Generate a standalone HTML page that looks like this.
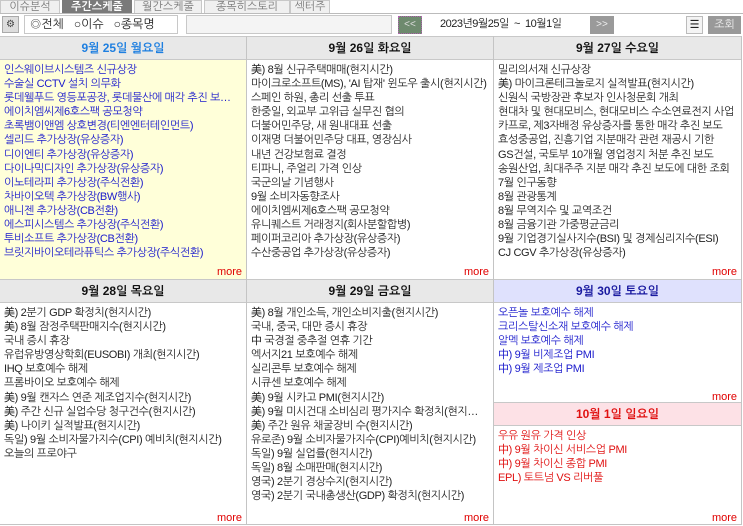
<!DOCTYPE html>
<html><head><meta charset="utf-8"><style>
*{margin:0;padding:0;box-sizing:border-box}
body{width:743px;height:526px;background:#fff;font-family:"Liberation Sans","NanumGothic","Noto Sans CJK KR",sans-serif;font-size:11px;color:#222;position:relative;overflow:hidden}
.abs{position:absolute}
.tab{position:absolute;top:0;height:14px;background:#f0f0f0;border:1px solid #c8c8c8;color:#777;font-size:11px;line-height:12px;text-align:center}
.tab.on{background:#7a7a7a;color:#fff;font-weight:bold;border-color:#7a7a7a}
.col{position:absolute;border-right:1px solid #c4c4c4;border-bottom:1px solid #c4c4c4}
.hd{height:24px;background:#e8e8e8;border-bottom:1px solid #c8c8c8;border-top:1px solid #c8c8c8;text-align:center;font-weight:bold;font-size:12px;line-height:22px;color:#111}
.items{padding:3px 0 0 4px}
.items div{height:14.1px;line-height:14.1px;white-space:nowrap;overflow:hidden;text-overflow:ellipsis;width:236px;letter-spacing:-0.35px}
.more{position:absolute;right:4px;color:#e00000;font-size:11px}
.blue{color:#1a1acc}
.red{color:#e01010}
</style></head><body>
<div class="tab" style="left:0;width:60px">이슈분석</div>
<div class="tab on" style="left:62px;width:70px">주간스케줄</div>
<div class="tab" style="left:134px;width:68px">월간스케줄</div>
<div class="tab" style="left:204px;width:86px">종목히스토리</div>
<div class="tab" style="left:290px;width:40px">섹터주</div>
<div class="abs" style="left:0;top:13px;width:743px;height:1px;background:#bbb"></div>
<div class="abs" style="left:2px;top:16px;width:17px;height:17px;background:#ddd;border:1px solid #aaa;font-size:10px;line-height:15px;text-align:center;color:#444">⚙</div>
<div class="abs" style="left:24px;top:15px;width:154px;height:19px;border:1px solid #c8c8c8;font-size:12px;line-height:17px;padding-left:5px;color:#222">◎전체 &nbsp;&nbsp;○이슈 &nbsp;&nbsp;○종목명</div>
<div class="abs" style="left:186px;top:15px;width:206px;height:19px;border:1px solid #c8c8c8;background:#f4f4f4"></div>
<div class="abs" style="left:398px;top:16px;width:24px;height:18px;background:#6e8a6e;border:1px dotted #b060b0;color:#ddd;font-size:10px;line-height:16px;text-align:center">&lt;&lt;</div>
<div class="abs" style="left:440px;top:16px;font-size:11px;line-height:17px;letter-spacing:-0.5px;color:#222">2023년9월25일 &nbsp;~ &nbsp;10월1일</div>
<div class="abs" style="left:590px;top:16px;width:24px;height:18px;background:#9a9a9a;color:#eee;font-size:10px;line-height:18px;text-align:center">&gt;&gt;</div>
<div class="abs" style="left:686px;top:16px;width:17px;height:18px;background:#f4f4f4;border:1px solid #bbb;font-size:11px;line-height:16px;text-align:center">☰</div>
<div class="abs" style="left:708px;top:16px;width:33px;height:18px;background:#999;color:#eee;font-size:11px;line-height:18px;text-align:center">조회</div>

<!-- row1 -->
<div class="col" style="left:0;top:36px;width:247px;height:244px;background:#ffffd9">
<div class="hd" style="color:#1e7fe0">9월 25일 월요일</div>
<div class="items blue">
<div>인스웨이브시스템즈 신규상장</div><div>수술실 CCTV 설치 의무화</div><div>롯데웰푸드 영등포공장, 롯데물산에 매각 추진 보도에 대한 조회공시</div><div>에이치엠씨제6호스팩 공모청약</div><div>초록뱀이앤엠 상호변경(티엔엔터테인먼트)</div><div>셀리드 추가상장(유상증자)</div><div>디이엔티 추가상장(유상증자)</div><div>다이나믹디자인 추가상장(유상증자)</div><div>이노테라피 추가상장(주식전환)</div><div>차바이오텍 추가상장(BW행사)</div><div>애니젠 추가상장(CB전환)</div><div>에스피시스템스 추가상장(주식전환)</div><div>투비소프트 추가상장(CB전환)</div><div>브릿지바이오테라퓨틱스 추가상장(주식전환)</div>
</div><div class="more" style="top:230px">more</div></div>
<div class="col" style="left:247px;top:36px;width:247px;height:244px">
<div class="hd">9월 26일 화요일</div>
<div class="items">
<div>美) 8월 신규주택매매(현지시간)</div><div>마이크로소프트(MS), 'AI 탑재' 윈도우 출시(현지시간)</div><div>스페인 하원, 총리 선출 투표</div><div>한중일, 외교부 고위급 실무진 협의</div><div>더불어민주당, 새 원내대표 선출</div><div>이재명 더불어민주당 대표, 영장심사</div><div>내년 건강보험료 결정</div><div>티파니, 주얼리 가격 인상</div><div>국군의날 기념행사</div><div>9월 소비자동향조사</div><div>에이치엠씨제6호스팩 공모청약</div><div>유니퀘스트 거래정지(회사분할합병)</div><div>페이퍼코리아 추가상장(유상증자)</div><div>수산중공업 추가상장(유상증자)</div>
</div><div class="more" style="top:230px">more</div></div>
<div class="col" style="left:494px;top:36px;width:248px;height:244px">
<div class="hd">9월 27일 수요일</div>
<div class="items">
<div>밀리의서재 신규상장</div><div>美) 마이크론테크놀로지 실적발표(현지시간)</div><div>신원식 국방장관 후보자 인사청문회 개최</div><div>현대차 및 현대모비스, 현대모비스 수소연료전지 사업</div><div>카프로, 제3자배정 유상증자를 통한 매각 추진 보도</div><div>효성중공업, 진흥기업 지분매각 관련 재공시 기한</div><div>GS건설, 국토부 10개월 영업정지 처분 추진 보도</div><div>송원산업, 최대주주 지분 매각 추진 보도에 대한 조회</div><div>7월 인구동향</div><div>8월 관광통계</div><div>8월 무역지수 및 교역조건</div><div>8월 금융기관 가중평균금리</div><div>9월 기업경기실사지수(BSI) 및 경제심리지수(ESI)</div><div>CJ CGV 추가상장(유상증자)</div>
</div><div class="more" style="top:230px">more</div></div>

<!-- row2 -->
<div class="col" style="left:0;top:279px;width:247px;height:246px">
<div class="hd">9월 28일 목요일</div>
<div class="items">
<div>美) 2분기 GDP 확정치(현지시간)</div><div>美) 8월 잠정주택판매지수(현지시간)</div><div>국내 증시 휴장</div><div>유럽유방영상학회(EUSOBI) 개최(현지시간)</div><div>IHQ 보호예수 해제</div><div>프롬바이오 보호예수 해제</div><div>美) 9월 캔자스 연준 제조업지수(현지시간)</div><div>美) 주간 신규 실업수당 청구건수(현지시간)</div><div>美) 나이키 실적발표(현지시간)</div><div>독일) 9월 소비자물가지수(CPI) 예비치(현지시간)</div><div>오늘의 프로야구</div>
</div><div class="more" style="top:233px">more</div></div>
<div class="col" style="left:247px;top:279px;width:247px;height:246px">
<div class="hd">9월 29일 금요일</div>
<div class="items">
<div>美) 8월 개인소득, 개인소비지출(현지시간)</div><div>국내, 중국, 대만 증시 휴장</div><div>中 국경절 중추절 연휴 기간</div><div>엑서지21 보호예수 해제</div><div>실리콘투 보호예수 해제</div><div>시큐센 보호예수 해제</div><div>美) 9월 시카고 PMI(현지시간)</div><div>美) 9월 미시건대 소비심리 평가지수 확정치(현지시간)</div><div>美) 주간 원유 채굴장비 수(현지시간)</div><div>유로존) 9월 소비자물가지수(CPI)예비치(현지시간)</div><div>독일) 9월 실업률(현지시간)</div><div>독일) 8월 소매판매(현지시간)</div><div>영국) 2분기 경상수지(현지시간)</div><div>영국) 2분기 국내총생산(GDP) 확정치(현지시간)</div>
</div><div class="more" style="top:233px">more</div></div>
<div class="col" style="left:494px;top:279px;width:248px;height:124px">
<div class="hd" style="background:#dfe1fd;color:#1a1aa0">9월 30일 토요일</div>
<div class="items blue">
<div>오픈놀 보호예수 해제</div><div>크리스탈신소재 보호예수 해제</div><div>알멕 보호예수 해제</div><div>中) 9월 비제조업 PMI</div><div>中) 9월 제조업 PMI</div>
</div><div class="more" style="top:112px">more</div></div>
<div class="col" style="left:494px;top:402px;width:248px;height:123px">
<div class="hd" style="background:#fde1e6;color:#e01010">10월 1일 일요일</div>
<div class="items red">
<div>우유 원유 가격 인상</div><div>中) 9월 차이신 서비스업 PMI</div><div>中) 9월 차이신 종합 PMI</div><div>EPL) 토트넘 VS 리버풀</div>
</div><div class="more" style="top:110px">more</div></div>
</body></html>
